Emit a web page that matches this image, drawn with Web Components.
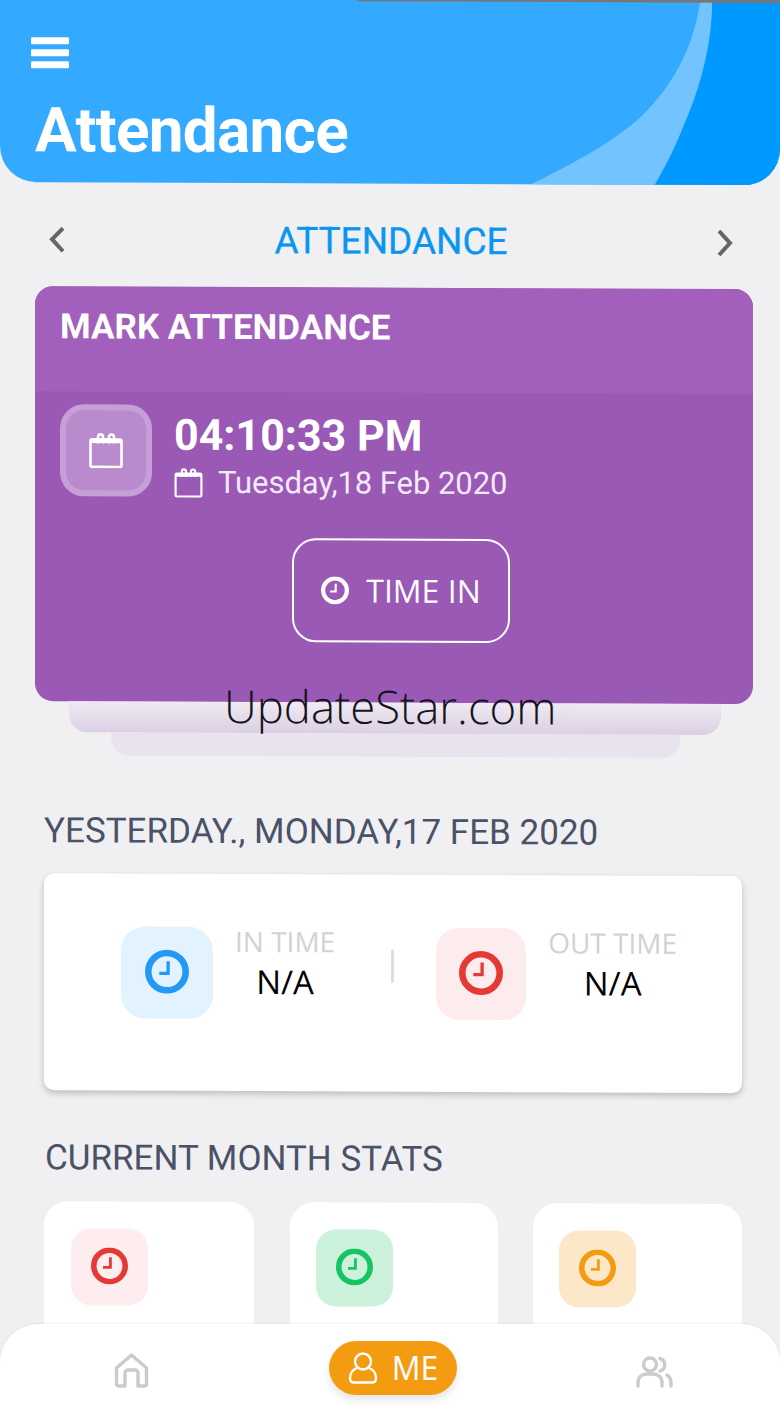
<!DOCTYPE html>
<html>
<head>
<meta charset="utf-8">
<title>Attendance</title>
<style>
  html, body { margin: 0; padding: 0; background: #f0f0f2; }
  body { width: 780px; height: 1409px; overflow: hidden; font-family: Roboto, "Liberation Sans", sans-serif; }
</style>
</head>
<body>
<app-screen>
  <app-header title="Attendance"></app-header>
  <month-switch label="ATTENDANCE"></month-switch>
  <mark-card time="04:10:33 PM" date="Tuesday,18 Feb 2020"></mark-card>
  <section-title top="56" left="44">YESTERDAY., MONDAY,17 FEB 2020</section-title>
  <punch-card></punch-card>
  <section-title top="48" left="45">CURRENT MONTH STATS</section-title>
  <stat-row></stat-row>
  <bottom-nav slot="nav"></bottom-nav>
</app-screen>

<script>
const clockSvg = (size, color) => `
  <svg width="${size}" height="${size}" viewBox="0 0 40 40" fill="none" stroke="${color}">
    <circle cx="20" cy="20" r="17" stroke-width="6"/>
    <path d="M21 10.5V21.5H13" stroke-width="3"/>
  </svg>`

const calendarSvg = (w, h, sw) => `
  <svg width="${w}" height="${h}" viewBox="0 0 34 36" fill="none" stroke="#fff" stroke-width="${sw}">
    <rect x="1.500" y="7" width="31" height="27.500" rx="1.500"/>
    <path d="M1.500 9H32.500" stroke-width="${sw * 1.3}"/>
    <path d="M9 11V4.500a2.500 2.500 0 0 1 5 0V11M20 11V4.500a2.500 2.500 0 0 1 5 0V11"/>
  </svg>`

customElements.define('app-screen', class AppScreen extends HTMLElement {
  connectedCallback() {
    const root = this.attachShadow({mode: 'open'})
    root.innerHTML = `
    <style>
      :host { display: block; position: relative; width: 780px; height: 1409px; overflow: hidden; background: #f0f0f2; }
      /* the source capture leans slightly downhill to the right */
      #tilt { transform: skewY(.24deg); transform-origin: 0 0; }
    </style>
    <div id="tilt"><slot></slot></div>
    <slot name="nav"></slot>`
  }
})

customElements.define('app-header', class AppHeader extends HTMLElement {
  connectedCallback() {
    const root = this.attachShadow({mode: 'open'})
    root.innerHTML = `
    <style>
      :host { display: block; position: relative; height: 186px; margin-top: -4px; background: #33aaff; border-radius: 0 0 36px 36px; overflow: hidden; box-sizing: border-box; padding: 41px 0 0 31px; }
      #wave { position: absolute; left: 0; top: 0; }
      #burger { position: relative; display: flex; flex-direction: column; gap: 5px; width: 38px; }
      #burger i { display: block; height: 7px; background: #fff; border-radius: 1px; }
      h1 { position: relative; margin: 26px 0 0 4px; font: 700 62px/72px Roboto, sans-serif; color: #fff; letter-spacing: -.7px; }
    </style>
    <svg id="wave" width="780" height="194" viewBox="0 0 780 194">
      <g transform="translate(0 4)">
        <path d="M712 -4V0C712 40 700 85 686 117C675 145 665 165 650 190H780V-4Z" fill="#0099ff"/>
        <path d="M700 -4V0C692 50 670 85 642 113C610 143 565 165 515 190H650C665 165 675 145 686 117C700 85 712 40 712 0V-4Z" fill="#73c3ff"/>
      </g>
      <path d="M357 0H780V3.700H357Z" fill="#777"/>
    </svg>
    <div id="burger"><i></i><i></i><i></i></div>
    <h1>${this.getAttribute('title')}</h1>`
  }
})

customElements.define('month-switch', class MonthSwitch extends HTMLElement {
  connectedCallback() {
    const root = this.attachShadow({mode: 'open'})
    const chevron = d => `<svg width="20" height="28" viewBox="0 0 20 28" fill="none" stroke="#666" stroke-width="4"><path d="${d}"/></svg>`
    root.innerHTML = `
    <style>
      :host { display: flex; align-items: center; justify-content: space-between; height: 104px; box-sizing: border-box; padding: 11px 46px 0 48px; }
      span { font: 400 37px/40px Roboto, sans-serif; color: #0a96f0; -webkit-text-stroke: .3px #0a96f0; }
    </style>
    ${chevron('M15 2L4 13L15 25')}
    <span>${this.getAttribute('label')}</span>
    ${chevron('M5 2L16 14L5 26')}`
  }
})

customElements.define('mark-card', class MarkCard extends HTMLElement {
  connectedCallback() {
    const root = this.attachShadow({mode: 'open'})
    root.innerHTML = `
    <style>
      :host { display: block; position: relative; padding: 0 27px 0 35px; }
      #card { border-radius: 18px; overflow: hidden; background: #9a59b5; height: 415px; }
      #head { height: 105px; box-sizing: border-box; background: #a35fbc; padding: 21px 0 0 25px; font: 700 35px/40px Roboto, sans-serif; color: #fff; }
      #now { display: flex; gap: 22px; padding: 13px 0 0 25px; }
      #tile { width: 92px; height: 92px; box-sizing: border-box; border: 6px solid #c59fd6; background: #b98bcd; border-radius: 24px; display: flex; align-items: center; justify-content: center; }
      #clock { font: 700 43px/52px Roboto, sans-serif; color: #fff; margin-top: 4px; }
      #date { display: flex; align-items: center; gap: 15px; font: 400 31px/38px Roboto, sans-serif; color: #f3e9f7; margin-top: 3px; letter-spacing: -.05px; }
      #btn-row { display: flex; justify-content: center; margin: 36px 0 0 14px; }
      #btn { width: 218px; height: 104px; box-sizing: border-box; border: 2px solid #fff; border-radius: 24px; display: flex; align-items: center; justify-content: center; gap: 17px; font: 400 32px/36px "Open Sans", sans-serif; color: #fff; }
      .under { border-radius: 0 0 18px 18px; }
      #u1 { height: 31px; margin: 0 32px 0 34px; background: linear-gradient(#efeaf2, #dccfe4); }
      #u2 { height: 23px; margin: 0 73px 0 76px; background: #e8e3ec; }
      #mark { position: absolute; left: 224px; top: 391px; font: 300 45.500px/54px "Open Sans", sans-serif; color: #14141c; white-space: nowrap; }
    </style>
    <div id="card">
      <div id="head">MARK ATTENDANCE</div>
      <div id="now">
        <div id="tile">${calendarSvg(34, 36, 2.6)}</div>
        <div>
          <div id="clock">${this.getAttribute('time')}</div>
          <div id="date">${calendarSvg(29, 30, 2.6)}<span>${this.getAttribute('date')}</span></div>
        </div>
      </div>
      <div id="btn-row"><div id="btn">${clockSvg(28, '#fff')}<span>TIME IN</span></div></div>
    </div>
    <div id="u1" class="under"></div>
    <div id="u2" class="under"></div>
    <div id="mark">UpdateStar.com</div>`
  }
})

customElements.define('section-title', class SectionTitle extends HTMLElement {
  connectedCallback() {
    const root = this.attachShadow({mode: 'open'})
    root.innerHTML = `
    <style>
      :host { display: block; margin-top: ${this.getAttribute('top')}px; padding-left: ${this.getAttribute('left')}px; font: 400 35px/40px Roboto, sans-serif; color: #4a5268; }
    </style>
    <slot></slot>`
  }
})

customElements.define('icon-tile', class IconTile extends HTMLElement {
  connectedCallback() {
    const size = parseInt(this.getAttribute('size'))
    const glyph = parseInt(this.getAttribute('glyph'))
    const root = this.attachShadow({mode: 'open'})
    root.innerHTML = `
    <style>
      :host { display: flex; flex: none; align-items: center; justify-content: center; box-sizing: border-box; padding-bottom: 3px; width: ${size}px; height: ${this.getAttribute('high') || size}px; border-radius: ${Math.round(size * .26)}px; background: ${this.getAttribute('bg')}; }
    </style>
    ${clockSvg(glyph, this.getAttribute('color'))}`
  }
})

customElements.define('punch-item', class PunchItem extends HTMLElement {
  connectedCallback() {
    const root = this.attachShadow({mode: 'open'})
    root.innerHTML = `
    <style>
      :host { display: flex; align-items: flex-start; gap: 22px; }
      #text { text-align: center; margin-top: -1px; }
      #label { font: 400 28px/30px "Open Sans", sans-serif; color: #d0d2d5; }
      #value { font: 400 33px/40px "Open Sans", sans-serif; color: #000; margin-top: 6px; }
    </style>
    <icon-tile size="${this.getAttribute('size')}" high="92" glyph="44" bg="${this.getAttribute('bg')}" color="${this.getAttribute('color')}"></icon-tile>
    <div id="text">
      <div id="label">${this.getAttribute('label')}</div>
      <div id="value">N/A</div>
    </div>`
  }
})

customElements.define('punch-card', class PunchCard extends HTMLElement {
  connectedCallback() {
    const root = this.attachShadow({mode: 'open'})
    root.innerHTML = `
    <style>
      :host { display: flex; align-items: flex-start; height: 217px; box-sizing: border-box; margin: 22px 38px 0 44px; padding: 53px 0 0 77px; background: #fff; border-radius: 10px; box-shadow: 0 3px 6px rgba(0,0,0,.22); }
      #rule { width: 3px; height: 33px; background: #dedede; margin: 22px 42px 0 56px; }
    </style>
    <punch-item label="IN TIME" size="92" bg="#e3f2ff" color="#2199f5"></punch-item>
    <div id="rule"></div>
    <punch-item label="OUT TIME" size="90" bg="#fdeced" color="#e53935"></punch-item>`
  }
})

customElements.define('stat-row', class StatRow extends HTMLElement {
  connectedCallback() {
    const root = this.attachShadow({mode: 'open'})
    const tile = (bg, color) => `<div class="stat"><icon-tile size="77" glyph="37" bg="${bg}" color="${color}"></icon-tile></div>`
    root.innerHTML = `
    <style>
      :host { display: grid; grid-template-columns: 210px 209px 209px; column-gap: 35px; margin: 23px 0 0 44px; }
      .stat { height: 240px; box-sizing: border-box; padding: 27px 0 0 26px; background: #fff; border-radius: 24px; }
      .stat:nth-child(2) { padding-left: 27px; }
      .stat:nth-child(3) { margin-left: 1px; }
    </style>
    ${tile('#feedee', '#e53935')}
    ${tile('#ccf2dc', '#16c464')}
    ${tile('#fce7c8', '#f39c12')}`
  }
})

customElements.define('bottom-nav', class BottomNav extends HTMLElement {
  connectedCallback() {
    const root = this.attachShadow({mode: 'open'})
    root.innerHTML = `
    <style>
      :host { position: absolute; left: 0; right: 0; bottom: 0; height: 85px; box-sizing: border-box; background: #fff; border-radius: 38px 38px 0 0; box-shadow: 0 -1px 2px rgba(0,0,0,.06); display: grid; grid-template-columns: 263px 128px 1fr; padding: 17px 0 0 0; align-items: start; }
      #home { padding: 12px 0 0 114px; }
      #me { height: 54px; margin-left: 66px; width: 128px; border-radius: 27px; background: #f39c12; box-shadow: 0 5px 8px rgba(0,0,0,.1); display: flex; align-items: center; justify-content: center; gap: 14px; font: 400 32px/38px "Open Sans", sans-serif; color: #fff; }
      #team { padding: 15px 0 0 245px; }
    </style>
    <div id="home">
      <svg width="35" height="35" viewBox="0 0 35 35" fill="none" stroke="#cbcbcb" stroke-width="3.4" stroke-linejoin="round">
        <path d="M2.500 15L17.500 2L32.500 15V31a2 2 0 0 1-2 2H24V20a3 3 0 0 0-3-3H14a3 3 0 0 0-3 3V33H4.500a2 2 0 0 1-2-2Z"/>
      </svg>
    </div>
    <div id="me">
      <svg width="30" height="32" viewBox="0 0 30 32" fill="none" stroke="#fff" stroke-width="2.4">
        <ellipse cx="15" cy="9.500" rx="8" ry="8"/>
        <path d="M9 16C4 18 2 21 2 26c0 3 1 4.500 3.500 4.500h19C27 30.500 28 29 28 26c0-5-2-8-7-10"/>
      </svg>
      <span>ME</span>
    </div>
    <div id="team">
      <svg width="37" height="32" viewBox="0 0 37 32" fill="none" stroke="#cbcbcb" stroke-width="3.4" stroke-linecap="round">
        <circle cx="14" cy="8.500" r="6.500"/>
        <path d="M2 30v-3c0-6 4-9 9-9h6c5 0 9 3 9 9v3"/>
        <path d="M24 2.500a6.500 6.500 0 0 1 0 12.500M31 19c2.500 1.500 4 4 4 8v3"/>
      </svg>
    </div>`
  }
})
</script>
</body>
</html>
